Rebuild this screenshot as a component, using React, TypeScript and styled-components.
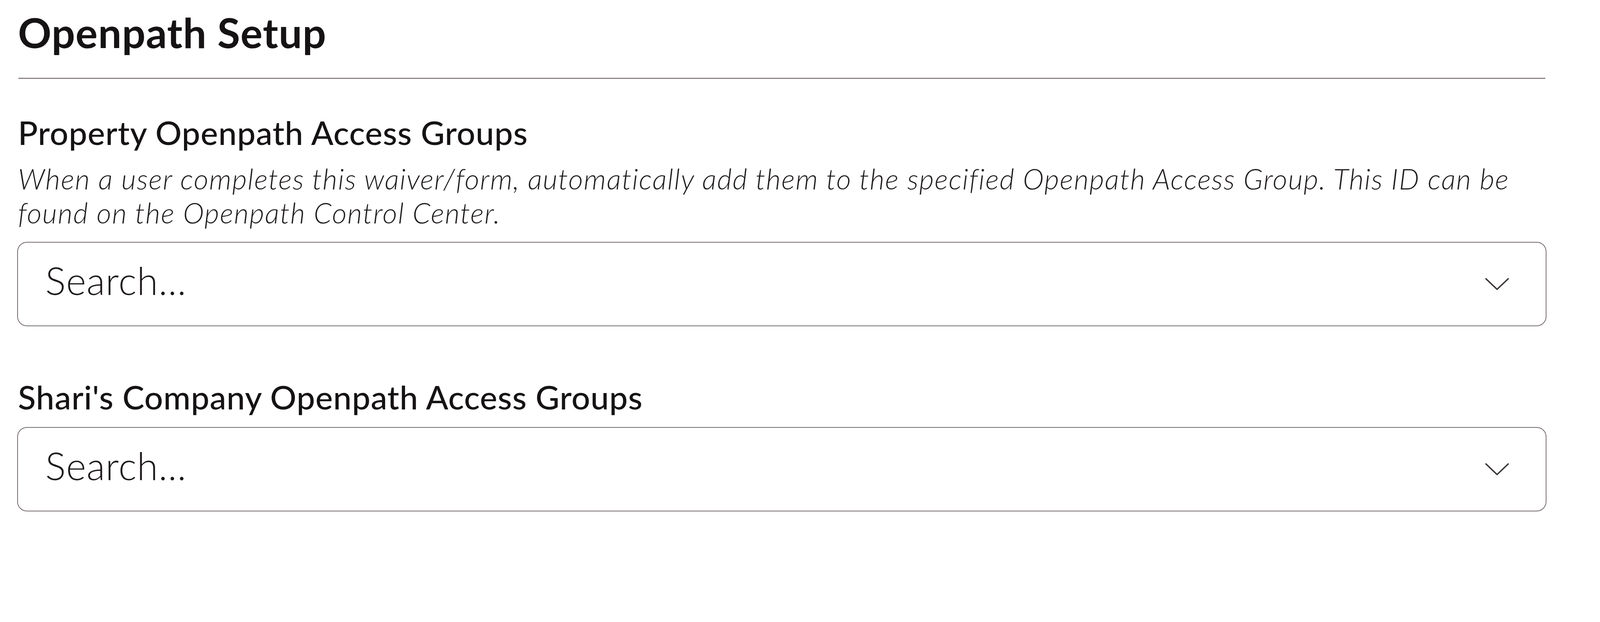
import React from 'react';
import styled, { createGlobalStyle } from 'styled-components';

const GlobalStyle = createGlobalStyle`
  html, body {
    margin: 0;
    padding: 0;
    background: #ffffff;
  }

  body {
    font-family: Lato, "Noto Sans", sans-serif;
    color: #161314;
  }
`;

const Page = styled.div`
  padding: 21px 137px 0 44px;
`;

const Title = styled.h1`
  margin: 0 0 56px 2px;
  font-size: 106px;
  line-height: 122px;
  font-weight: 700;
  letter-spacing: 1.2px;
`;

const Divider = styled.hr`
  margin: 0 3px;
  border: none;
  height: 3px;
  background: #8d8586;
`;

const Field = styled.section<{ gap: number }>`
  margin-top: ${(props) => `${props.gap}px`};
`;

const Label = styled.h2`
  margin: 0 0 0 2px;
  font-size: 84px;
  line-height: 96px;
  font-weight: 500;
  letter-spacing: 1px;
`;

const Hint = styled.p`
  margin: 27px 0 0 2px;
  font-size: 73px;
  line-height: 87px;
  font-style: italic;
  font-weight: 300;
  letter-spacing: 1.9px;
  color: #221e1f;
`;

const Select = styled.div<{ offset: number }>`
  display: flex;
  align-items: center;
  justify-content: space-between;
  box-sizing: border-box;
  height: 216px;
  margin-top: ${(props) => `${props.offset}px`};
  padding: 0 94px 0 70px;
  border: 2.7px solid #766d6f;
  border-radius: 25px;
`;

const Placeholder = styled.span`
  padding-bottom: 20px;
  font-size: 98px;
  line-height: 118px;
  font-weight: 300;
  letter-spacing: 1.2px;
  color: #1d191a;
`;

const Chevron = () => (
  <svg width="61" height="33" viewBox="0 0 61 33" fill="none">
    <polyline
      points="2,2.5 30.5,29.5 59,2.5"
      stroke="#3a3435"
      strokeWidth="3.6"
      strokeLinecap="round"
      strokeLinejoin="round"
    />
  </svg>
);

const SearchSelect = ({ offset }: { offset: number }) => (
  <Select offset={offset}>
    <Placeholder>Search...</Placeholder>
    <Chevron />
  </Select>
);

const App = () => (
  <Page>
    <GlobalStyle />
    <Title>Openpath Setup</Title>
    <Divider />
    <Field gap={89}>
      <Label>Property Openpath Access Groups</Label>
      <Hint>
        When a user completes this waiver/form, automatically add them to the specified Openpath
        Access Group. This ID can be found on the Openpath Control Center.
      </Hint>
      <SearchSelect offset={31} />
    </Field>
    <Field gap={133}>
      <Label>Shari's Company Openpath Access Groups</Label>
      <SearchSelect offset={29} />
    </Field>
  </Page>
);

export default App;
